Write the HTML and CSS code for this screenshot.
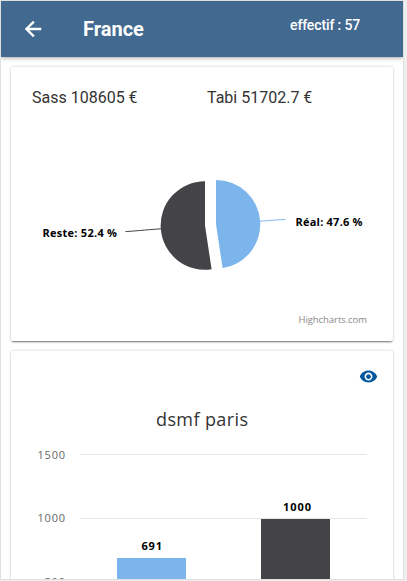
FILE: index.html
```
<!DOCTYPE html>
<html lang="fr">

<head>
    <meta charset="UTF-8">
    <meta name="viewport" content="width=device-width, initial-scale=1.0">
    <title>France</title>
    <link rel="stylesheet" href="styles.css">
</head>

<body>
    <div class="app">
        <header class="bar">
            <svg class="back" viewBox="0 0 24 24">
                <path d="M20 11H7.83l5.59-5.59L12 4l-8 8 8 8 1.41-1.41L7.83 13H20v-2z" />
            </svg>
            <h1>France</h1>
            <span class="effectif">effectif : 57</span>
        </header>

        <main>
            <section class="card">
                <div class="stats">
                    <span>Sass 108605 €</span>
                    <span>Tabi 51702.7 €</span>
                </div>
                <svg class="chart" width="382" height="224" viewBox="11 117 382 224">
                    <path class="blue" d="M216 224.3V180A44.3 44.3 0 0 1 222.6 268.1Z" />
                    <path class="dark" d="M205 225.5L211.6 269.3A44.3 44.3 0 1 1 205 181.2Z" />
                    <path class="line-blue" d="M285.5 219.5C280.5 219.5 270 220.6 260 221.2" />
                    <path class="line-dark" d="M125.5 231.5C130.5 231.5 146 229.8 161 228.8" />
                    <text class="label" x="295.5" y="226" textLength="67">Réal: 47.6 %</text>
                    <text class="label" x="42.5" y="237" textLength="74.5">Reste: 52.4 %</text>
                    <text class="credits" x="298.5" y="323" textLength="68.5">Highcharts.com</text>
                </svg>
            </section>

            <section class="card">
                <div class="tools">
                    <svg class="eye" viewBox="0 0 24 24">
                        <path d="M12 4.5C7 4.5 2.73 7.61 1 12c1.73 4.39 6 7.5 11 7.5s9.27-3.11 11-7.5c-1.73-4.39-6-7.5-11-7.5zM12 17c-2.76 0-5-2.24-5-5s2.24-5 5-5 5 2.24 5 5-2.24 5-5 5zm0-8c-1.66 0-3 1.34-3 3s1.34 3 3 3 3-1.34 3-3-1.34-3-3-3z" />
                    </svg>
                </div>
                <svg class="chart" width="382" height="300" viewBox="11 401 382 300">
                    <text class="title" x="156" y="426" textLength="92">dsmf paris</text>
                    <path class="grid" d="M80 454.5H367M80 518.5H367M80 582.5H367" />
                    <text class="axis" x="37.5" y="459" textLength="27.5">1500</text>
                    <text class="axis" x="37.5" y="522" textLength="27.5">1000</text>
                    <text class="axis" x="44.5" y="586" textLength="20.5">500</text>
                    <rect class="blue" x="117" y="558" width="69" height="88" />
                    <rect class="dark" x="261" y="519" width="69" height="127" />
                    <text class="label" x="141.5" y="550" textLength="20.5">691</text>
                    <text class="label" x="283" y="511" textLength="28">1000</text>
                </svg>
            </section>
        </main>
    </div>
</body>

</html>
```

FILE: styles.css
```
* {
    margin: 0;
    padding: 0;
    box-sizing: border-box;
}

body {
    height: 581px;
    overflow: hidden;
    background-color: #eee;
    font-family: Roboto, "Liberation Sans", sans-serif;
}

.app {
    width: 404px;
    height: 580px;
    border: 1px solid #e0e0e0;
    overflow: hidden;
    background-color: #fff;
}

.bar {
    position: relative;
    display: flex;
    height: 56px;
    padding-left: 20px;
    color: #fff;
    background-color: #42698f;
    box-shadow: 0 1px 4px rgba(0, 0, 0, 0.35);
}

.back {
    width: 24px;
    height: 24px;
    margin-top: 16px;
    fill: #fff;
    stroke: #fff;
    stroke-width: 0.5;
}

.bar h1 {
    width: 207px;
    padding-left: 38px;
    font-size: 20px;
    font-weight: 700;
    line-height: 56px;
}

.effectif {
    padding-top: 15px;
    padding-left: 38px;
    font-size: 14px;
    font-weight: 500;
    letter-spacing: -0.12px;
    line-height: 18px;
}

main {
    padding: 10px;
}

.card {
    width: 382px;
    margin-bottom: 10px;
    border-radius: 2px;
    background-color: #fff;
    box-shadow: 0 2px 2px -1px rgba(0, 0, 0, 0.5), 0 0 3px rgba(0, 0, 0, 0.2);
}

.stats {
    display: flex;
    height: 50px;
    padding-left: 21px;
    color: #333;
    font-size: 16px;
    line-height: 62px;
}

.stats span {
    width: 175px;
}

.chart {
    display: block;
    font-family: "Open Sans", "Noto Sans", sans-serif;
}

.blue {
    fill: #7cb5ec;
}

.dark {
    fill: #434348;
}

.line-blue,
.line-dark {
    fill: none;
    stroke: #7cb5ec;
}

.line-dark {
    stroke: #434348;
}

.label {
    font-size: 11px;
    font-weight: 700;
}

.credits {
    fill: #888;
    font-size: 9.5px;
}

.title {
    fill: #333;
    font-size: 18px;
}

.axis {
    fill: #666;
    font-size: 11px;
}

.grid {
    stroke: #e6e6e6;
}

.tools {
    display: flex;
    justify-content: flex-end;
    height: 50px;
    padding: 16px 15px 0 0;
}

.eye {
    width: 19px;
    height: 19px;
    fill: #01579b;
}
```
